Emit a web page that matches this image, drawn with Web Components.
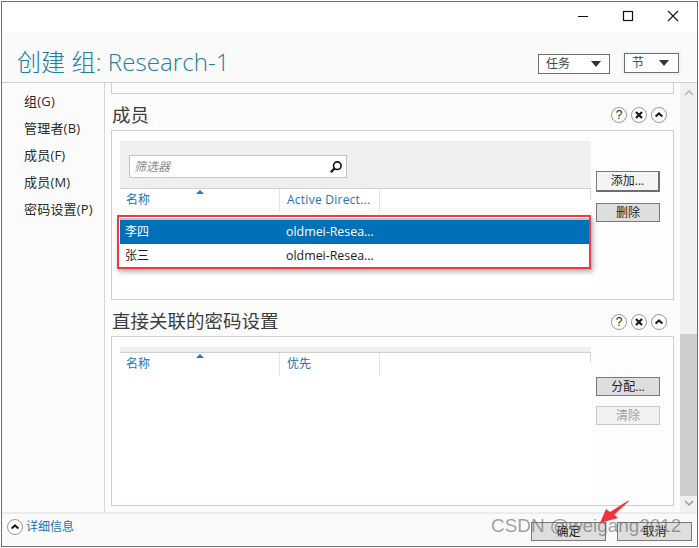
<!DOCTYPE html>
<html lang="zh"><head><meta charset="utf-8"><style>
html,body{margin:0;padding:0;background:#fff}
body{font-family:"Open Sans","Noto Sans CJK SC",sans-serif;width:699px;height:548px;overflow:hidden}
</style></head><body>
<x-window>
  <x-titlebar slot="top"></x-titlebar>
  <x-header slot="top" title-text="创建 组: Research-1">
    <x-drop style="width:72px;height:20px;margin-top:1px;margin-right:14px;padding-right:8px">任务</x-drop>
    <x-drop glow style="width:55px;height:20px;padding-right:9px">节</x-drop>
  </x-header>
  <x-nav slot="nav">
    <span>组(G)</span><span>管理者(B)</span><span>成员(F)</span><span>成员(M)</span><span>密码设置(P)</span>
  </x-nav>
  <x-stub slot="content"></x-stub>
  <x-section slot="content" heading="成员" first>
    <x-filter slot="band"></x-filter>
    <x-grid slot="grid" col2="Active Direct..." spaced>
      <x-row selected a="李四" b="oldmei-Resea..."></x-row>
      <x-row a="张三" b="oldmei-Resea..."></x-row>
    </x-grid>
    <x-btn slot="actions" def style="margin-top:30px">添加...</x-btn>
    <x-btn slot="actions" style="margin-top:11px">删除</x-btn>
  </x-section>
  <x-section slot="content" heading="直接关联的密码设置">
    <x-band slot="band"></x-band>
    <x-grid slot="grid" col2="优先"></x-grid>
    <x-btn slot="actions" style="margin-top:30px">分配...</x-btn>
    <x-btn slot="actions" disabled style="margin-top:10px">清除</x-btn>
  </x-section>
  <x-scrollbar slot="scroll"></x-scrollbar>
  <x-footer slot="bottom">
    <x-btn wide style="margin-right:11px">确定</x-btn>
    <x-btn wide>取消</x-btn>
  </x-footer>
  <x-annotations slot="overlay"></x-annotations>
</x-window>
<script>
const FONT='"Open Sans","Noto Sans CJK SC",sans-serif';
function def(name,html){
  customElements.define(name,class extends HTMLElement{
    connectedCallback(){
      if(this.shadowRoot)return;
      const r=this.attachShadow({mode:'open'});
      r.innerHTML=typeof html==='function'?html(this):html;
    }
  });
}
const chev=`<svg width="18" height="18" viewBox="0 0 18 18"><circle cx="9" cy="9" r="7.5" fill="#fff" stroke="#9a9a9a"/><path d="M5.6 10.6 9 7.4l3.4 3.2" fill="none" stroke="#1a1a1a" stroke-width="2"/></svg>`;
const help=`<svg width="18" height="18" viewBox="0 0 18 18"><circle cx="9" cy="9" r="7.5" fill="#fff" stroke="#9a9a9a"/><text x="9" y="13.4" text-anchor="middle" font-family="Liberation Sans" font-size="12" fill="#222">?</text></svg>`;
const cross=`<svg width="18" height="18" viewBox="0 0 18 18"><circle cx="9" cy="9" r="7.5" fill="#fff" stroke="#9a9a9a"/><path d="M6 6l6 6M12 6l-6 6" fill="none" stroke="#1a1a1a" stroke-width="2.2"/></svg>`;

def('x-window',`<style>
:host{display:block;position:relative;margin:1px 0 0 1px;width:697px;height:546px;box-sizing:border-box;border:1px solid #707070;background:#fbfbfb;overflow:hidden}
.main{display:flex;height:429px}
.content{width:575px;padding-left:6px;box-sizing:border-box;background:#fcfcfc}
</style>
<slot name="top"></slot>
<div class="main"><slot name="nav"></slot><div class="content"><slot name="content"></slot></div><slot name="scroll"></slot></div>
<slot name="bottom"></slot><slot name="overlay"></slot>`);

def('x-titlebar',`<style>
:host{display:flex;height:30px;background:#fff;justify-content:flex-end;align-items:flex-start}
svg{display:block}
</style>
<svg width="120" height="30" viewBox="0 0 120 30" fill="none" stroke="#111" stroke-width="1">
<path d="M1 14.5h10"/><rect x="46.5" y="9.5" width="9" height="9" stroke-width="1.2"/><path d="M91 9l10 10M101 9l-10 10" stroke-width="1.1"/></svg>`);

def('x-header',h=>`<style>
:host{display:flex;height:50px;box-sizing:content-box;background:#fafafa;border-bottom:1px solid #cfcfcf;align-items:flex-start;padding:0 18px 0 15px}
h1{margin:14px 0 0;font:300 24px/32px ${FONT};color:#1b7fa6;flex:1;white-space:pre;letter-spacing:.1px}
.r{display:flex;align-items:flex-start;padding-top:21px}
</style><h1>${h.getAttribute('title-text')}</h1><div class="r"><slot></slot></div>`);

def('x-drop',h=>`<style>
:host{display:flex;box-sizing:border-box;border:1px solid #6f6f6f;background:#fff;align-items:center;justify-content:space-between;padding:0 5px 0 7px;font:12px/16px ${FONT};color:#444;${h.hasAttribute('glow')?'box-shadow:0 0 0 2px #eef3fb;':''}}
i{width:0;height:0;border:5px solid transparent;border-top:6px solid #333;border-bottom:0;display:block}
</style><slot></slot><i></i>`);

def('x-nav',`<style>
:host{display:block;width:102px;box-sizing:content-box;border-right:1px solid #d4d4d4;padding-top:5px;background:#fbfbfb}
::slotted(span){display:block;height:27px;padding-left:22px;font:13px/27px ${FONT};color:#2a2a2a;white-space:nowrap;letter-spacing:.2px}
</style><slot></slot>`);

def('x-stub',`<style>:host{display:block;height:11px;width:563px;box-sizing:border-box;border:1px solid #cfcfcf;border-top:0;background:#fcfcfc}</style>`);

def('x-section',h=>{const f=h.hasAttribute('first');return `<style>
:host{display:block;width:563px}
.head{display:flex;height:36px;align-items:flex-start;justify-content:space-between;padding-right:6px;box-sizing:border-box}
h2{margin:8px 0 0 1px;font:400 18.5px/26px ${FONT};color:#3c3c3c}
.ic{display:flex;gap:2px;margin-top:${f?12:13}px}
svg{display:block}
.box{box-sizing:border-box;height:170px;border:1px solid #cfcfcf;background:#fdfdfd;display:flex;padding:10px 0 0 8px}
.left{width:471px;display:flex;flex-direction:column}
.acts{width:64px;margin-left:5px;display:flex;flex-direction:column}
</style>
<div class="head"><h2>${h.getAttribute('heading')}</h2><div class="ic">${help}${cross}${chev}</div></div>
<div class="box"><div class="left"><slot name="band"></slot><slot name="grid"></slot></div><div class="acts"><slot name="actions"></slot></div></div>`});

def('x-band',`<style>:host{display:block;height:5px;background:#efefef}</style>`);

def('x-filter',`<style>
:host{display:block;height:47px;background:#efefef;box-sizing:border-box;padding:14px 0 0 9px}
.in{width:218px;height:23px;box-sizing:border-box;border:1px solid #c4c4c4;background:#fff;display:flex;align-items:center;justify-content:space-between;padding:0 3px 0 4px;font:italic 12px/16px ${FONT};color:#8a8a8a}
svg{display:block}
</style><div class="in"><span>筛选器</span><svg width="14" height="14" viewBox="0 0 14 14" fill="none" stroke="#111"><circle cx="8.3" cy="5.7" r="3.8" stroke-width="1.6"/><path d="M5.5 8.5 1.8 12.2" stroke-width="2.2"/></svg></div>`);

def('x-grid',h=>`<style>
:host{display:block;flex:1;margin-bottom:7px;border-top:1px solid #cfcfcf;background:#fff;position:relative}
.hd{display:flex;height:29px;font:12px/16px ${FONT};color:#2272b6;position:relative;background:linear-gradient(#d8d8d8,#d8d8d8) right top/1px 10px no-repeat #fff}
.hd div{box-sizing:border-box;padding:3px 0 0 6px;height:23px;border-right:1px solid #e4e4e4;white-space:nowrap}
.c1{width:160px}.c2{width:100px;padding-left:7px!important;${h.hasAttribute('spaced')?'letter-spacing:.25px;':''}}
.up{position:absolute;left:76px;top:1px;width:0;height:0;border:4px solid transparent;border-bottom:4px solid #1f7ac0;border-top:0}
</style><div class="hd"><div class="c1">名称</div><div class="c2">${h.getAttribute('col2')}</div><i class="up"></i></div><slot></slot>`);

def('x-row',h=>{const s=h.hasAttribute('selected');return `<style>
:host{display:flex;box-sizing:content-box;height:24px;align-items:center;font:12px/16px ${FONT};color:${s?'#fff':'#1c1c1c'};background:${s?'#0070b8':'#fff'};${s?'border-top:2px solid #b9c4cc;':''}}
.a{width:160px;padding-left:5px;box-sizing:border-box}
.b{padding-left:6px;font-size:12.4px}
</style><div class="a">${h.getAttribute('a')}</div><div class="b">${h.getAttribute('b')}</div>`});

def('x-btn',h=>{const d=h.hasAttribute('disabled'),df=h.hasAttribute('def'),w=h.hasAttribute('wide');return `<style>
:host{display:flex;box-sizing:border-box;width:${w?'75px':'64px'};height:${df?'21px':'19px'};align-items:center;justify-content:center;
border:1px solid ${d?'#c8c8c8':'#7a7a7a'};${df?'border-right:2px solid #6e6e6e;border-bottom:2px solid #6e6e6e;border-top:1px solid #777;':''}
background:${d?'#f2f2f2':df?'#f4f4f4':'#dedede'};color:${d?'#a0a0a0':'#222'};font:12px/16px ${FONT}}
</style><slot></slot>`});

def('x-scrollbar',`<style>
:host{display:flex;flex-direction:column;width:17px;background:#f0f0f0;align-items:center;justify-content:space-between}
.sp{flex:1;width:100%;display:flex;flex-direction:column}
.th{height:162px;background:#cdcdcd;width:100%;margin-top:auto}
svg{display:block;flex:none}
</style>
<svg width="16" height="17" viewBox="0 0 16 17"><path d="M4 12l4-4 4 4" fill="none" stroke="#b5b5b5" stroke-width="1.5"/></svg>
<div class="sp"><div class="th"></div></div>
<svg width="16" height="16" viewBox="0 0 16 16"><path d="M4 5l4 4 4-4" fill="none" stroke="#9a9a9a" stroke-width="1.5"/></svg>`);

def('x-footer',`<style>
:host{display:flex;height:34px;box-sizing:border-box;border-top:2px solid #ececec;background:#fafafa;align-items:flex-start;padding:8px 5px 0 4px}
.d{display:flex;align-items:center;gap:2px;margin-right:auto;font:12px/16px ${FONT};color:#2272b6;margin-top:-4px}
svg{display:block}
</style><div class="d">${chev}<span>详细信息</span></div><slot></slot>`);

def('x-annotations',`<style>
:host{position:absolute;inset:0;display:block;pointer-events:none}
.red{position:absolute;left:115px;top:213px;width:474px;height:54px;box-sizing:border-box;border:2px solid #f03a3f;box-shadow:2px 3px 5px rgba(0,0,0,.3)}
.wm{position:absolute;left:489px;top:512px;font:18.9px/24px "Liberation Sans",sans-serif;color:rgba(100,100,100,.6);white-space:nowrap}
svg{position:absolute;left:590px;top:495px}
</style><div class="red"></div><div class="wm">CSDN @weigang2012</div>
<svg width="44" height="34" viewBox="0 0 44 34"><path d="M37 4 22.5 17.5 26 21 8 26 14 12l4 3L36.3 3.4z" fill="#f0323a"/></svg>`);
</script>
</body></html>
